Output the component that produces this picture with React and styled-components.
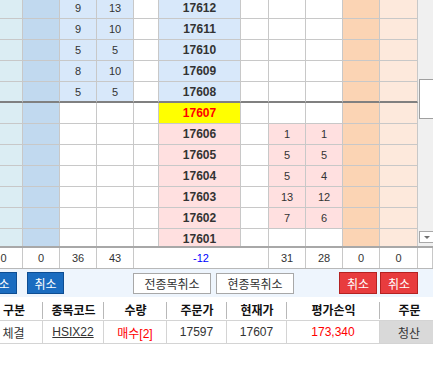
import React from "react";
import styled, { createGlobalStyle } from "styled-components";

const GlobalStyle = createGlobalStyle`
  html, body { margin: 0; padding: 0; background: #fff; }
  body { font-family: "Liberation Sans", "Noto Sans CJK KR", sans-serif; }
`;

const tones = {
  cyan: "#dbedf3",
  blue: "#c1d9ef",
  ask: "#d8e8fa",
  bid: "#ffe0e0",
  orange: "#fbd4b4",
  peach: "#fde9dc",
  yellow: "#ffff00",
  white: "#ffffff",
};

const LADDER_COLS = "38px 37px 37px 37px 25px 82px 28px 37px 37px 37px 38px";
const TOTAL_COLS = "38px 37px 37px 37px 135px 37px 37px 37px 38px 15px";
const TABLE_COLS = "58px 61px 63px 60px 60px 93px 59px";

const asks = [
  [9, 13, 17612],
  [9, 10, 17611],
  [5, 5, 17610],
  [8, 10, 17609],
  [5, 5, 17608],
];
const bids = [
  [17606, 1, 1],
  [17605, 5, 5],
  [17604, 5, 4],
  [17603, 13, 12],
  [17602, 7, 6],
  [17601, "", ""],
];
const totals = ["0", "0", "36", "43", "-12", "31", "28", "0", "0", ""];

const Page = styled.div`
  width: 433px;
  height: 390px;
  overflow: hidden;
  background: #fff;
`;

const Shift = styled.div`
  width: 454px;
  margin-left: -15px;
`;

const Board = styled.div`
  display: flex;
`;

const Viewport = styled.div`
  width: 433px;
  height: 246px;
  overflow: hidden;
`;

const Ladder = styled.div`
  margin-top: -2px;
`;

const Row = styled.div`
  display: grid;
  grid-template-columns: ${LADDER_COLS};
  height: 21px;
`;

const Cell = styled.div`
  box-sizing: border-box;
  display: flex;
  align-items: center;
  justify-content: center;
  background: ${(p) => tones[p.$tone || "white"]};
  border-right: 1px solid #c8c8c8;
  border-bottom: ${(p) => (p.$split ? "2px solid #808080" : "1px solid #c8c8c8")};
  font-size: 11px;
  color: #333;
`;

const Price = styled(Cell)`
  font-size: 12px;
  font-weight: bold;
  color: ${(p) => (p.$now ? "#ff0000" : "#333")};
`;

const ScrollBar = styled.div`
  width: 15px;
  height: 246px;
  background: #f0f0f0;
  display: flex;
  flex-direction: column;
  align-items: flex-end;
`;

const Thumb = styled.div`
  box-sizing: border-box;
  margin-top: 79px;
  width: 14px;
  height: 40px;
  background: #fff;
  border: 1px solid #a0a0a0;
  border-right: none;
`;

const ArrowBtn = styled.div`
  box-sizing: border-box;
  margin-top: auto;
  margin-bottom: 3px;
  width: 14px;
  height: 12px;
  background: #fff;
  border: 1px solid #a8a8a8;
  border-right: none;
  display: flex;
  align-items: center;
  justify-content: center;
  &::after {
    content: "";
    border-left: 3px solid transparent;
    border-right: 3px solid transparent;
    border-top: 3px solid #707070;
  }
`;

const TotalRow = styled.div`
  display: grid;
  grid-template-columns: ${TOTAL_COLS};
  height: 23px;
  box-sizing: border-box;
  border-top: 2px solid #a8a8a8;
  border-bottom: 1px solid #b8b8b8;
`;

const TotalCell = styled.div`
  display: flex;
  align-items: center;
  justify-content: center;
  border-right: 1px solid #c8c8c8;
  font-size: 11px;
  color: ${(p) => (p.$minus ? "#0000ff" : "#333")};
`;

const ButtonBar = styled.div`
  display: flex;
  align-items: center;
  height: 28px;
  background: #eef5fd;
  padding-right: 21px;
`;

const Group = styled.div`
  display: flex;
  align-items: center;
  gap: ${(p) => p.$gap}px;
  margin-left: ${(p) => p.$left};
`;

const ColorButton = styled.button`
  box-sizing: border-box;
  width: ${(p) => p.$w}px;
  height: 22px;
  padding: 0;
  border: 1px solid ${(p) => (p.$red ? "#b42222" : "#0d4d92")};
  background: ${(p) => (p.$red ? "#e83c3e" : "#1a6cc0")};
  color: #fff;
  font-family: "Noto Sans CJK KR", sans-serif;
  font-size: 12px;
`;

const PlainButton = styled.button`
  box-sizing: border-box;
  width: 78px;
  height: 21px;
  padding: 0;
  border: 1px solid #a8a8a8;
  background: #fff;
  color: #333;
  font-family: "Noto Sans CJK KR", sans-serif;
  font-size: 12px;
`;

const Table = styled.div`
  margin-top: 1px;
  font-family: "Liberation Sans", "Noto Sans CJK KR", sans-serif;
  font-size: 12px;
`;

const HeadRow = styled.div`
  display: grid;
  grid-template-columns: ${TABLE_COLS};
  height: 22px;
`;

const Head = styled.div`
  position: relative;
  display: flex;
  align-items: center;
  justify-content: center;
  font-weight: bold;
  color: #111;
  &::after {
    content: "";
    position: absolute;
    right: 0;
    top: 4px;
    bottom: 1px;
    width: 1px;
    background: #b8b8b8;
  }
`;

const DataRow = styled.div`
  display: grid;
  grid-template-columns: ${TABLE_COLS};
  height: 24px;
  box-sizing: border-box;
  border-top: 1px solid #d4d4d4;
  border-bottom: 1px solid #d4d4d4;
`;

const Data = styled.div`
  display: flex;
  align-items: center;
  justify-content: center;
  border-right: 1px solid #d4d4d4;
  color: ${(p) => (p.$red ? "#ff0000" : "#333")};
  background: ${(p) => (p.$gray ? "#d9d9d9" : "transparent")};
  text-decoration: ${(p) => (p.$link ? "underline" : "none")};
`;

function LadderRow({ side, left = "", right = "", price, now, split }) {
  const isAsk = side === "ask";
  const isBid = side === "bid";
  return (
    <Row>
      <Cell $tone="cyan" $split={split} />
      <Cell $tone="blue" $split={split} />
      <Cell $tone={isAsk ? "ask" : "white"} $split={split}>{isAsk ? left : ""}</Cell>
      <Cell $tone={isAsk ? "ask" : "white"} $split={split}>{isAsk ? right : ""}</Cell>
      <Cell $split={split} />
      <Price $tone={now ? "yellow" : side} $now={now} $split={split}>{price}</Price>
      <Cell $split={split} />
      <Cell $tone={isBid && left !== "" ? "bid" : "white"} $split={split}>{isBid ? left : ""}</Cell>
      <Cell $tone={isBid && right !== "" ? "bid" : "white"} $split={split}>{isBid ? right : ""}</Cell>
      <Cell $tone="orange" $split={split} />
      <Cell $tone="peach" $split={split} />
    </Row>
  );
}

export default function App() {
  return (
    <Page>
      <GlobalStyle />
      <Shift>
        <Board>
          <Viewport>
            <Ladder>
              {asks.map(([a, b, p], i) => (
                <LadderRow key={p} side="ask" left={a} right={b} price={p} split={i === asks.length - 1} />
              ))}
              <LadderRow side="white" price={17607} now />
              {bids.map(([p, a, b]) => (
                <LadderRow key={p} side="bid" left={a} right={b} price={p} />
              ))}
            </Ladder>
          </Viewport>
          <ScrollBar>
            <Thumb />
            <ArrowBtn />
          </ScrollBar>
        </Board>

        <TotalRow>
          {totals.map((t, i) => (
            <TotalCell key={i} $minus={i === 4}>{t}</TotalCell>
          ))}
        </TotalRow>

        <ButtonBar>
          <Group $gap={10} $left="-5px">
            <ColorButton $w={37}>취소</ColorButton>
            <ColorButton $w={37}>취소</ColorButton>
          </Group>
          <Group $gap={5} $left="69px">
            <PlainButton>전종목취소</PlainButton>
            <PlainButton>현종목취소</PlainButton>
          </Group>
          <Group $gap={3} $left="auto">
            <ColorButton $w={38} $red>취소</ColorButton>
            <ColorButton $w={38} $red>취소</ColorButton>
          </Group>
        </ButtonBar>

        <Table>
          <HeadRow>
            <Head>구분</Head>
            <Head>종목코드</Head>
            <Head>수량</Head>
            <Head>주문가</Head>
            <Head>현재가</Head>
            <Head>평가손익</Head>
            <Head>주문</Head>
          </HeadRow>
          <DataRow>
            <Data>체결</Data>
            <Data $link>HSIX22</Data>
            <Data $red>매수[2]</Data>
            <Data>17597</Data>
            <Data>17607</Data>
            <Data $red>173,340</Data>
            <Data $gray>청산</Data>
          </DataRow>
        </Table>
      </Shift>
    </Page>
  );
}
